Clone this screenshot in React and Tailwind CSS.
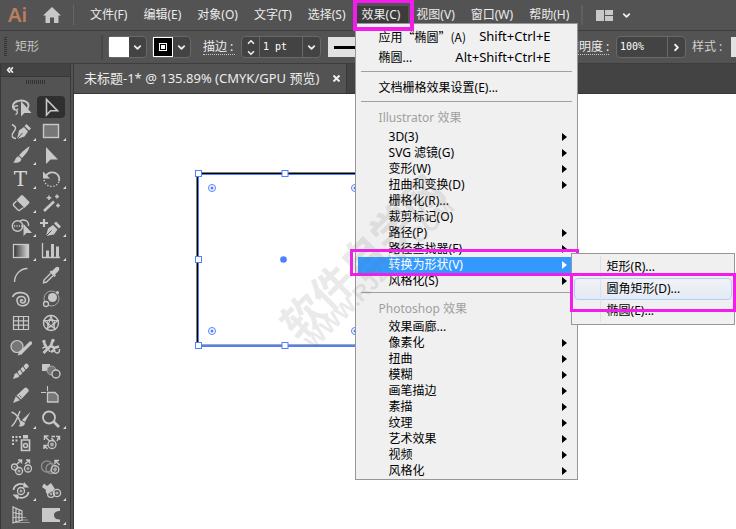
import React, { useState } from 'react';
import { ChevronDown, ChevronRight, ChevronUp, ChevronsLeft } from 'lucide-react';

const MENUS = ['文件(F)', '编辑(E)', '对象(O)', '文字(T)', '选择(S)', '效果(C)', '视图(V)', '窗口(W)', '帮助(H)'];

const ILLUSTRATOR_EFFECTS = [
  { label: '3D(3)', sub: true },
  { label: 'SVG 滤镜(G)', sub: true },
  { label: '变形(W)', sub: true },
  { label: '扭曲和变换(D)', sub: true },
  { label: '栅格化(R)...' },
  { label: '裁剪标记(O)' },
  { label: '路径(P)', sub: true },
  { label: '路径查找器(F)', sub: true },
  { label: '转换为形状(V)', sub: true, open: true },
  { label: '风格化(S)', sub: true }
];

const PHOTOSHOP_EFFECTS = [
  { label: '效果画廊...' },
  { label: '像素化', sub: true },
  { label: '扭曲', sub: true },
  { label: '模糊', sub: true },
  { label: '画笔描边', sub: true },
  { label: '素描', sub: true },
  { label: '纹理', sub: true },
  { label: '艺术效果', sub: true },
  { label: '视频', sub: true },
  { label: '风格化', sub: true }
];

const SHAPES = ['矩形(R)...', '圆角矩形(D)...', '椭圆(E)...'];

// small ring with a dot, used by all symbol tools
const Sym = ({ x, y, r = 3.5 }) => (
  <>
    <circle cx={x} cy={y} r={r} fill="none" stroke="#c8c8c8" strokeWidth="1.3" />
    <circle cx={x} cy={y} r={r - 2} fill="#a8a8a8" />
  </>
);

const line = { fill: 'none', stroke: '#c8c8c8', strokeWidth: 1.4 };

const TOOLS = [
  { name: '套索', icon: <><path {...line} strokeWidth="1.8" d="M6 14C2 11 4 6 9 5C14 3.500 20 6 19.500 10C19.300 11.500 18.500 13 17 14" /><path {...line} d="M9 10C6 9 4.500 11 5.500 13C6.500 15 9 14 8.500 12.500M7.500 14.500C9 16 8.500 18 6.500 18.500" /><path d="M12 5V20.500L15.500 17H22.500Z" /></> },
  { name: '选择', active: true, icon: <path {...line} strokeWidth="1.6" d="M7.500 3.500V19L11.500 14.800H18.500Z" /> },
  { name: '曲率', more: true, icon: <><path {...line} d="M3 4.500C8 7 7 9 4.500 12C2 15.500 3 18.500 7 18.500" /><path d="M8 19L10 10.500L15 7L19 11.500L15.500 16.500Z" /><path d="M15.500 6L17.500 4L22 8.500L20 10.500Z" /><path stroke="#535353" d="M8 19L13.500 13" /></> },
  { name: '矩形', more: true, icon: <rect x="4.500" y="4.500" width="15" height="13" fill="#777" stroke="#c8c8c8" strokeWidth="1.400" /> },
  { name: '画笔', more: true, icon: <><path d="M20.500 2.500C21 4 16 11.500 13 14L10 11.500C13 8 19 2.500 20.500 2.500Z" /><path d="M9.500 12.300L12.300 14.800C12.500 18.500 8 19.500 4 18.500C6.500 17.500 6 13 9.500 12.300Z" /></> },
  { name: '直接选择', icon: <path d="M7 3V20L11.500 15.500H19Z" /> },
  { name: '文字', more: true, icon: null },
  { name: '旋转', more: true, icon: <><path {...line} strokeWidth="1.800" d="M6.500 8.500C9 4 15 2.800 18.500 6.500C20.300 8.500 20.500 11 20 13" /><path d="M4 3.500V10.500H11Z" /><path {...line} strokeWidth="1.500" strokeDasharray="1.300 1.800" d="M5 12C6 16 9 18.500 13 18.500C17 18.500 19 16 20 13" /></> },
  { name: '橡皮擦', more: true, icon: <><path d="M12 3.500Q13 2.500 14 3.500L20 9.500Q21 10.500 20 11.500L15.500 16L7.500 8Z" /><path {...line} d="M7.500 9L4.500 12Q4 13 5 14L9 18Q10 19 11 18L14.500 15.500" /></> },
  { name: '魔棒', icon: <><path {...line} strokeWidth="2.600" d="M5 19L15 9.500" /><path {...line} strokeWidth="1.500" d="M10 3.500V8M7.700 5.700H12.300M18 2.500V6.500M16 4.500H20M19 11.500V15.500M17 13.500H21" /></> },
  { name: '形状生成器', more: true, icon: <><circle {...line} cx="8.500" cy="10" r="5.200" /><path {...line} d="M11 5C15 2.500 20 5 19.500 10" /><path {...line} strokeDasharray="1.200 1.200" d="M5 10H16" /><path d="M14.500 8V20L17.500 17H23Z" /></> },
  { name: '添加锚点', more: true, icon: <><path {...line} strokeWidth="2.200" d="M1 7H9M5 3V11" /><path d="M7 20L9 12.500L14 9L18.500 13.500L15 18.500Z" /><path d="M15 7.500L17 5.500L22 10.500L20 12.500Z" /><path stroke="#535353" d="M7 20L12.500 14.500" /></> },
  { name: '渐变', more: true, icon: <><defs><linearGradient id="toolGradient"><stop offset="0" stopColor="#333" /><stop offset="1" stopColor="#d8d8d8" /></linearGradient></defs><rect x="4.500" y="4.500" width="15" height="13" fill="url(#toolGradient)" stroke="#c8c8c8" strokeWidth="1.300" /></> },
  { name: '柱形图', more: true, icon: <><path {...line} strokeWidth="1.300" d="M3.500 3V17.500H21" /><path d="M7 10.500H10V17H7ZM12 4H15V17H12ZM17 6.500H20V17H17Z" /></> },
  { name: '弧形', icon: <path {...line} d="M5.500 18C5.500 11 11 4.500 18.500 4.500" /> },
  { name: '吸管', icon: <><path d="M13 7L16.500 3.500Q18.500 2 20 3.500Q21 5 19.500 7L16 10.500L17 11.500L15.500 13L10.500 8L12 6.500Z" /><path {...line} d="M11.500 9.500L5 16L4.500 18.800L7.500 18L14 11.800" /></> },
  { name: '螺旋线', icon: <path {...line} strokeWidth="1.600" d="M3.500 9C6 3 19 2.500 20 11.500C20 19 9 20 8 13C7.500 8 16 6.500 16.500 12C16.500 16 11 15.500 11.500 13C12 11 14 12 13.500 13" /> },
  { name: '光晕', icon: <><circle {...line} strokeWidth="1" opacity=".7" cx="12.500" cy="10.500" r="7.500" /><circle cx="13.500" cy="9.500" r="4.500" /><circle cx="18.500" cy="4.500" r="1.500" /><circle cx="7" cy="16" r="2.500" fill="#535353" stroke="#c8c8c8" strokeWidth="1.300" /></> },
  { name: '矩形网格', icon: <path {...line} strokeWidth="1.200" d="M4.500 4.500H19.500V17.500H4.500ZM9.500 4.500V17.500M14.500 4.500V17.500M4.500 8.800H19.500M4.500 13.200H19.500" /> },
  { name: '极坐标网格', icon: <><circle {...line} cx="12" cy="11" r="7.500" /><circle {...line} strokeWidth="1.100" cx="12" cy="11" r="3.800" /><path {...line} strokeWidth="1.100" d="M5 8.500H19L8 17L12 4L16 17Z" /></> },
  { name: 'Shaper', icon: <><circle cx="8" cy="10.500" r="6" fill="#777" stroke="#c8c8c8" strokeWidth="1.200" /><path stroke="#c8c8c8" strokeWidth="3.200" strokeLinecap="round" d="M12 16.500L21.500 7" /><path d="M8.500 19.500L10.500 15L13.500 18Z" /></> },
  { name: '操控变形', icon: <><path {...line} strokeWidth="2.600" strokeLinejoin="round" d="M4.500 17L8.500 13L5 7M8.500 13L12 9.500L15 12L20 10.500M12 16L16 13.500M12 9.500L13.500 5" /><path {...line} d="M15 12C15 18 21 19 20.500 13M3.500 12.500C6 9 9 12 11 16" /><circle cx="5" cy="5.500" r="1.700" /><circle cx="14" cy="4.500" r="1.700" /></> },
  { name: '铅笔', icon: <><path stroke="#c8c8c8" strokeWidth="4.500" strokeLinecap="round" d="M9 14.500L17.500 6" /><path d="M4 19L6 13L10 17Z" /><path stroke="#535353" strokeWidth="1" d="M8 12L11 16.500M11 9L14 13.500M14 6L17 10.500" /></> },
  { name: '混合', icon: <><path d="M3 4H11V11H3Z" /><circle cx="12.500" cy="10.500" r="4.500" fill="#777" stroke="#a8a8a8" /><circle cx="17" cy="14" r="4" fill="#535353" stroke="#c8c8c8" strokeWidth="1.400" /></> },
  { name: '平滑', icon: <><path d="M15.500 4Q17 3 18.500 4.500Q20.500 6 19.500 7.500L12 15.500L7.500 11.500Z" /><path d="M6.800 12.300L11 16.200L4 19Z" /><path stroke="#535353" strokeWidth=".8" d="M10 11L12.500 13.500" /></> },
  { name: '画板', icon: <><path d="M8.500 8.500H16L19 11.500V18H8.500Z" fill="#777" stroke="#c8c8c8" strokeWidth="1.300" /><path {...line} strokeWidth="1.100" d="M2 8.500H7M8.500 2V7M10 8.500H13" /></> },
  { name: '美工刀', more: true, icon: <><path {...line} d="M2.500 4C8 6 11 11 12 17M11 3C8 10 7 15 2.500 18.500" /><path d="M21.500 4L16 14L13 12ZM12.500 12.800L16 15C16 18 12 19.500 9.500 18C12 17 10.500 14 12.500 12.800Z" /></> },
  { name: '缩放', more: true, icon: <><circle {...line} strokeWidth="1.800" cx="10" cy="9.500" r="6" /><path {...line} strokeWidth="2.600" d="M14.500 13.500L20 19" /></> },
  { name: '符号喷枪', icon: <><path d="M3 4H5V6H3ZM6.500 4H8.500V6H6.500ZM10 4H12V6H10ZM3 7.500H5V9.500H3ZM6.500 7.500H8.500V9.500H6.500ZM3 11H5V13H3ZM14 3H19V6.500H14Z" /><path {...line} strokeWidth="1.700" d="M12.500 8H20.500V18.500H12.500Z" /><circle {...line} cx="16.500" cy="13.500" r="2" /></> },
  { name: '符号移位器', icon: <><Sym x={13} y={12.500} r={4} /><path {...line} d="M10.500 9L5.500 4M5.500 8V4H9.500M15 9L12.500 6M18 9L20 4.500M8.500 17L5 13.500M5 17V13.500H8.500M12.500 4.500H16M20.500 8V4.500H17" /></> },
  { name: '符号紧缩器', icon: <><Sym x={5.5} y={11} r={3} /><Sym x={10} y={15} /><Sym x={19} y={12.500} /><path {...line} d="M8 8L12 4.500M9 4H12.500V7.500M16 8L20 4.500M17 4H20.500V7.500" /></> },
  { name: '符号缩放器', icon: <><g opacity=".5"><circle {...line} cx="8" cy="10.500" r="5.500" /><circle {...line} cx="12" cy="12.500" r="5" /></g><Sym x={16} y={13.500} r={3.8} /><path {...line} d="M20.500 9L16 4.500M16 8V4.500H20" /></> },
  { name: '符号旋转器', more: true, icon: <><Sym x={12} y={11} /><path {...line} strokeWidth="1.800" d="M4.500 10C5 5 11 2 16.500 5.500M19.500 12C19 17 13 19.500 7.500 16.500" /><path d="M15 2L20 7.500H14ZM9 20L3.500 14.500H9.500Z" /></> },
  { name: '符号着色器', more: true, icon: <><path d="M3 7L5 3.500L8 6L12 3L16 9L9 14Q6 13 7 10Z" /><Sym x={12} y={14} r={3.4} /><Sym x={18} y={13} r={3.6} /></> },
  { name: '透视网格', icon: <><path {...line} strokeWidth="1.200" d="M4 3V19L13 16V7ZM7 4.500V18M10 5.500V17M4 8.500L13 10M4 13.500L13 13" /><path {...line} strokeWidth="1" opacity=".6" d="M13 13.500H17M12 16H19M7 18.500H21" /></> },
  { name: '网格', more: true, icon: <path d="M3 4H21V7C17 7 15 9 15 11C15 14 17 15.500 21 15.500V18H3Z" /> }
];

const Arrow = () => (
  <svg viewBox="0 0 5 8" className="ml-auto mr-2 h-2 w-[5px] fill-current"><path d="M0 0L5 4L0 8Z" /></svg>
);

const Separator = () => <li role="separator" className="mx-[3px] mb-[5px] mt-[3px] h-px bg-[#a0a0a0]" />;

const SubMenu = () => (
  <ul role="menu" className="absolute -top-1 right-[-160px] z-20 flex w-[164px] flex-col border border-[#979797] bg-[#f0f0f0] py-[2px] pl-[2px] pr-[2px] text-black">
    {SHAPES.map((label, i) => (
      <li key={label}>
        <button
          role="menuitem"
          className={`flex h-[22px] w-full items-center rounded-sm border pl-8 text-left ${
            i === 1 ? 'border-[#aecff7] bg-linear-to-b from-[#f0f2f6] to-[#e4eaf4]' : 'border-transparent'
          }`}
        >
          {label}
        </button>
      </li>
    ))}
    {/* icon gutter and the marker around the chosen shape */}
    <span className="pointer-events-none absolute inset-y-[2px] left-7 w-px bg-[#e0e0e0]" />
    <span className="pointer-events-none absolute -left-[2px] -right-[2px] top-[19px] h-[39px] border-3 border-[#f41cec]" />
  </ul>
);

const EffectItems = ({ items }) => items.map((item) => (
  <li key={item.label} className={item.open ? 'relative z-10' : ''}>
    <button
      role="menuitem"
      aria-haspopup={item.sub ? 'menu' : undefined}
      className={`flex h-4 w-full items-center pl-[31px] text-left ${item.open ? 'bg-[#3399ff] text-white' : 'hover:bg-[#dbe9f8]'}`}
    >
      {item.label}
      {item.sub && <Arrow />}
    </button>
    {item.open && (
      <>
        <span className="pointer-events-none absolute -bottom-[3px] -left-2 -right-1 -top-2 border-3 border-[#f41cec]" />
        <SubMenu />
      </>
    )}
  </li>
));

const EffectMenu = () => (
  <ul role="menu" className="absolute left-px top-[23px] z-20 w-[223px] border border-[#979797] bg-[#f0f0f0] px-[2px] pt-[2px] text-black">
    <li>
      <button role="menuitem" className="flex h-[21px] w-full items-center justify-between pl-[21px] pr-6">
        <span className="font-['Noto_Sans_CJK_SC',sans-serif]">应用“椭圆”(A)</span>
        <span className="text-[13px]">Shift+Ctrl+E</span>
      </button>
    </li>
    <li>
      <button role="menuitem" className="flex h-[21px] w-full items-center justify-between pl-[21px] pr-6">
        <span>椭圆...</span>
        <span className="text-[13px]">Alt+Shift+Ctrl+E</span>
      </button>
    </li>
    <Separator />
    <li>
      <button role="menuitem" className="flex h-[21px] w-full items-center pl-[21px]">文档栅格效果设置(E)...</button>
    </li>
    <Separator />
    <li className="flex h-[22px] items-center pl-[21px] text-[#a0a0a0]">Illustrator 效果</li>
    <EffectItems items={ILLUSTRATOR_EFFECTS} />
    <Separator />
    <li className="flex h-[21px] items-center pl-[21px] text-[#a0a0a0]">Photoshop 效果</li>
    <EffectItems items={PHOTOSHOP_EFFECTS} />
  </ul>
);

const MenuBar = () => (
  <header className="flex h-[30px] items-center">
    <span className="w-9 pl-2 font-['Noto_Sans',sans-serif] text-xl font-semibold leading-none text-[#bb7f60]">Ai</span>
    <button aria-label="主页" className="ml-[7px] mr-3">
      <svg viewBox="0 0 18 16" className="h-4 w-[18px] fill-[#c8c8c8]"><path d="M9 0L18 8.500H15.500V16H11V10.500H7V16H2.500V8.500H0Z" /></svg>
    </button>
    <span className="h-5 w-px bg-[#666]" />
    <nav className="ml-2 flex h-full">
      {MENUS.map((m, i) => (
        <div key={m} className="relative flex items-center">
          <button className={`h-[19px] px-2 ${i === 5 ? 'bg-[#3c3c3c]' : ''}`}>{m}</button>
          {i === 5 && (
            <>
              <EffectMenu />
              <span className="pointer-events-none absolute -bottom-px -left-px -right-[6px] top-0 z-30 border-4 border-[#f41cec] border-t-3" />
            </>
          )}
        </div>
      ))}
    </nav>
    <span className="ml-1 h-5 w-[2px] bg-[#5f5f5f]" />
    <button aria-label="排列文档" className="ml-[13px] flex items-center gap-2">
      <svg viewBox="0 0 17 11" className="h-[11px] w-[17px] fill-[#c8c8c8]"><path d="M0 0H8V11H0ZM9 0H17V5H9ZM9 6H17V11H9Z" /></svg>
      <ChevronDown size={11} strokeWidth={4} />
    </button>
  </header>
);

const Swatch = ({ label, children }) => (
  <button aria-label={label} className="flex h-[22px] items-center rounded-sm border border-[#686868] bg-[#434343]">
    {children}
    <span className="flex w-[17px] justify-center"><ChevronDown size={11} strokeWidth={4} /></span>
  </button>
);

const OptionsBar = () => {
  const [stroke, setStroke] = useState('1 pt');
  const [opacity, setOpacity] = useState('100%');

  return (
    <div className="flex h-[34px] items-center overflow-hidden border-y border-[#3d3d3d] whitespace-nowrap">
      <span className="ml-1 h-5 w-[3px] shrink-0 bg-[repeating-linear-gradient(#333_0_1px,transparent_1px_2px)]" />
      <span className="ml-2 w-[86px] shrink-0 text-[#c4c4c4]">矩形</span>
      <span className="mr-[5px] h-[25px] w-[2px] shrink-0 bg-[#484848]" />
      <div className="flex shrink-0 gap-[5px]">
        <Swatch label="填色"><span className="size-5 bg-white" /></Swatch>
        <Swatch label="描边颜色">
          <span className="flex size-5 items-center justify-center border border-white bg-black">
            <span className="flex size-[8px] items-center justify-center border border-white"><span className="size-[4px] bg-white" /></span>
          </span>
        </Swatch>
      </div>
      <label htmlFor="stroke" className="ml-3 w-8 shrink-0 border-b border-dotted border-[#c8c8c8] leading-[14px]">描边 :</label>
      <div className="ml-[6px] flex h-[22px] w-20 shrink-0 items-center rounded-sm border border-[#686868] bg-[#434343]">
        <span className="flex w-[18px] flex-col items-center gap-px border-r border-[#686868]">
          <button aria-label="增加"><ChevronUp size={10} strokeWidth={4} /></button>
          <button aria-label="减少"><ChevronDown size={10} strokeWidth={4} /></button>
        </span>
        <input id="stroke" value={stroke} onChange={(e) => setStroke(e.target.value)} className="w-0 flex-1 pl-[3px] font-['DejaVu_Sans_Mono',monospace] text-[10px] text-white outline-none" />
        <button aria-label="描边粗细" className="flex h-full w-[18px] items-center justify-center border-l border-[#686868]"><ChevronDown size={11} strokeWidth={4} /></button>
      </div>
      <button aria-label="变量宽度配置文件" className="ml-[7px] flex h-5 w-52 shrink-0 items-center bg-[#e2e2e2] px-[6px]"><span className="h-[3px] w-full bg-black" /></button>
      <label htmlFor="opacity" className="ml-[19px] w-[54px] shrink-0 border-b border-dotted border-[#c8c8c8] leading-[14px]">不透明度 :</label>
      <div className="ml-[7px] flex h-[22px] w-[70px] shrink-0 items-center rounded-sm border border-[#686868] bg-[#434343]">
        <input id="opacity" value={opacity} onChange={(e) => setOpacity(e.target.value)} className="w-0 flex-1 pl-[3px] font-['DejaVu_Sans_Mono',monospace] text-[10px] text-white outline-none" />
        <button aria-label="不透明度选项" className="flex h-full w-[18px] items-center justify-center border-l border-[#686868]"><ChevronRight size={11} strokeWidth={4} /></button>
      </div>
      <span className="ml-[6px] w-[39px] shrink-0 text-[#d0d0d0]">样式 :</span>
      <button aria-label="图形样式" className="h-5 w-5 shrink-0 bg-[#e2e2e2]" />
    </div>
  );
};

const ToolPanel = () => (
  <aside className="w-[71px] shrink-0 border-x border-[#383838]">
    <button aria-label="折叠面板" className="flex h-[13px] w-full items-center border-b border-[#383838] bg-[#434343] pl-1"><ChevronsLeft size={10} strokeWidth={4} /></button>
    <div className="mx-auto mb-3 mt-[3px] h-1 w-5 bg-[repeating-linear-gradient(90deg,#333_0_1px,transparent_1px_2px)]" />
    <div className="grid grid-cols-[30px_30px] justify-center">
      {TOOLS.map((tool) => (
        <button key={tool.name} aria-label={tool.name} className="flex h-6 items-start justify-center">
          <span className={`relative flex w-7 justify-center rounded-sm ${tool.active ? 'h-[22px] bg-[#2f2f2f]' : 'h-6'}`}>
            {tool.icon ? (
              <svg viewBox="0 0 24 24" className="size-6 shrink-0 fill-[#c8c8c8]">{tool.icon}</svg>
            ) : (
              <span className="font-['DejaVu_Serif',serif] text-xl font-normal leading-[22px] text-[#d8d8d8]">T</span>
            )}
            {tool.more && (
              <svg viewBox="0 0 3 3" className="absolute -right-px bottom-[3px] size-[3px] fill-[#e0e0e0]"><path d="M3 0V3H0Z" /></svg>
            )}
          </span>
        </button>
      ))}
    </div>
  </aside>
);

const Artboard = () => {
  const handles = [[124, 79.5], [210.5, 79.5], [295, 79.5], [124, 165.5], [295, 165.5], [124, 251.5], [210.5, 251.5], [295, 251.5]];
  const corners = [[138, 94], [281, 94], [138, 237], [281, 237]];

  return (
    <svg className="h-[435px] w-full" fill="none" stroke="#4f80ff">
      <path d="M123.500 252V79.500H296" stroke="#000" strokeWidth="2" />
      <path d="M124 250.500H296" stroke="#a8a8a8" />
      <path d="M124.500 251V80.500H295.500V251" />
      <path d="M124 252H296" strokeWidth="2" />
      {handles.map(([x, y]) => <rect key={`${x}-${y}`} x={x - 2.5} y={y - 3} width="6" height="6" fill="#fff" />)}
      {corners.map(([x, y]) => (
        <g key={`${x}-${y}`}>
          <circle cx={x} cy={y} r="3.500" />
          <circle cx={x} cy={y} r="1.500" fill="#4f80ff" stroke="none" />
        </g>
      ))}
      <circle cx="209.500" cy="165.500" r="3.300" fill="#4f80ff" stroke="none" />
    </svg>
  );
};

const Watermark = () => (
  <div className="pointer-events-none absolute left-[237px] top-[235px] z-40 flex w-[260px] -rotate-45 flex-col items-center whitespace-nowrap font-['Noto_Sans_CJK_SC',sans-serif] font-bold text-[#777] opacity-15">
    <span className="text-[42px] leading-9">软件自学网</span>
    <span className="font-['Liberation_Sans',sans-serif] text-[22px] leading-[18px]">WWW.RJZXW.COM</span>
  </div>
);

export default function App() {
  return (
    <div lang="zh-CN" className="relative flex min-h-screen flex-col overflow-hidden bg-[#535353] font-['Noto_Sans','Noto_Sans_CJK_SC',sans-serif] text-xs text-[#ececec]">
      <MenuBar />
      <OptionsBar />
      <div className="flex flex-1">
        <ToolPanel />
        <main className="ml-[2px] flex min-w-0 flex-1 flex-col border-l border-[#383838]">
          <div className="flex h-[30px] border-b border-[#383838] bg-[#434343]">
            <div className="flex w-[273px] items-center justify-between border-r border-[#383838] bg-[#535353] pl-[10px] pr-[6px]">
              <span className="whitespace-nowrap text-[13px]">未标题-1* @ 135.89% (CMYK/GPU 预览)</span>
              <button aria-label="关闭">
                <svg viewBox="0 0 7 7" className="size-[7px]" stroke="#eee" strokeWidth="2"><path d="M.5 .5L6.500 6.500M6.500 .5L.5 6.500" /></svg>
              </button>
            </div>
          </div>
          <div className="flex-1 bg-white"><Artboard /></div>
        </main>
      </div>
      <Watermark />
    </div>
  );
}
